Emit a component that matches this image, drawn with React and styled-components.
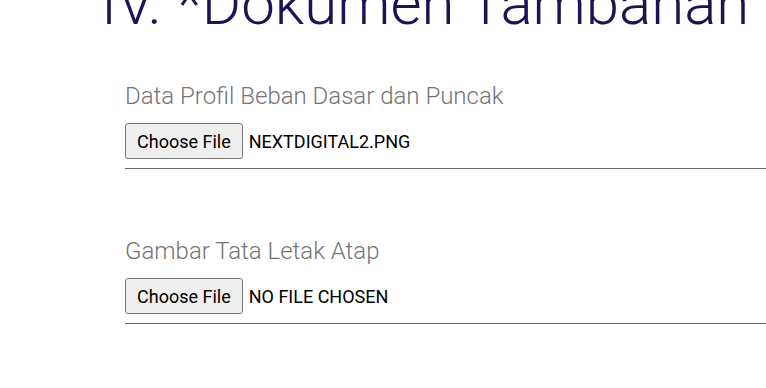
import React from "react";
import styled, { createGlobalStyle } from "styled-components";

const GlobalStyle = createGlobalStyle`
  html, body {
    margin: 0;
    padding: 0;
    background: #ffffff;
    overflow: hidden;
  }
  body {
    font-family: Roboto, "Liberation Sans", Arial, sans-serif;
  }
`;

const Page = styled.div`
  width: 766px;
  height: 388px;
  overflow: hidden;
`;

const SectionTitle = styled.h2`
  margin: -26px 0 0 101px;
  font-family: Roboto, "Liberation Sans", sans-serif;
  font-weight: 300;
  font-size: 60px;
  line-height: 60px;
  color: #1b1450;
  white-space: nowrap;
`;

const Form = styled.div`
  display: flex;
  flex-direction: column;
  gap: 67px;
  padding: 47px 0 0 125px;
`;

const Field = styled.div`
  display: flex;
  flex-direction: column;
  border-bottom: 1px solid #6b6b6b;
`;

const Label = styled.label`
  font-weight: 300;
  font-size: 24px;
  line-height: 30px;
  color: #757575;
`;

const FileRow = styled.div`
  display: flex;
  align-items: center;
  gap: 6px;
  padding: 12px 0 9px;
`;

const ChooseButton = styled.button`
  font-family: Roboto, "Liberation Sans", sans-serif;
  font-size: 18px;
  height: 36px;
  padding: 0 11px;
  color: #000;
  background: #efefef;
  border: 1px solid #767676;
  border-radius: 3px;
`;

const FileName = styled.span`
  font-size: 18px;
  color: #000;
  text-transform: uppercase;
`;

const fields = [
  { label: "Data Profil Beban Dasar dan Puncak", file: "NextDigital2.png" },
  { label: "Gambar Tata Letak Atap", file: "No file chosen" },
];

export default function App() {
  return (
    <>
      <GlobalStyle />
      <Page>
        <SectionTitle>IV. *Dokumen Tambahan</SectionTitle>
        <Form>
          {fields.map((f) => (
            <Field key={f.label}>
              <Label>{f.label}</Label>
              <FileRow>
                <ChooseButton type="button">Choose File</ChooseButton>
                <FileName>{f.file}</FileName>
              </FileRow>
            </Field>
          ))}
        </Form>
      </Page>
    </>
  );
}
